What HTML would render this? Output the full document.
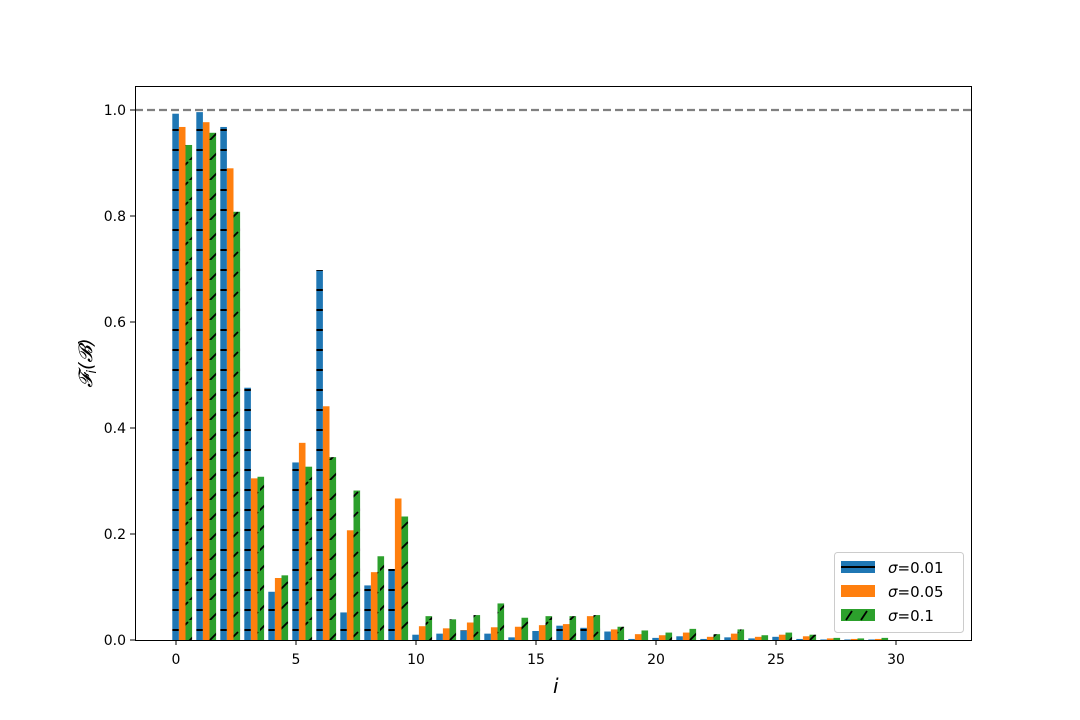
<!DOCTYPE html>
<html><head><meta charset="utf-8"><style>
html,body{margin:0;padding:0;background:#fff;width:1080px;height:720px;overflow:hidden}
svg text{font-family:"DejaVu Sans","Liberation Sans",sans-serif;fill:#000}
</style></head><body>
<svg id="s" width="1080" height="720" xmlns="http://www.w3.org/2000/svg">
<defs>
<pattern id="hb" patternUnits="userSpaceOnUse" x="0" y="0" width="24" height="20">
<rect width="24" height="20" fill="#1f77b4"/><rect y="9" width="24" height="2" fill="#000"/></pattern>
<pattern id="hg" patternUnits="userSpaceOnUse" x="0" y="0" width="20" height="20">
<rect width="20" height="20" fill="#2ca02c"/><path d="M-2,12 L8,2 M8,22 L18,12" stroke="#000" stroke-width="1.8"/></pattern>
</defs>
<rect x="135" y="86" width="837" height="554" fill="#fff"/>
<g id="bars"></g>
<line x1="135" y1="110" x2="972" y2="110" stroke="#808080" stroke-width="2.2" stroke-dasharray="8,4"/>
<rect x="135.5" y="86.5" width="836" height="554" fill="none" stroke="#000" stroke-width="1"/>
<g id="ticks" font-size="14"></g>
<text x="553" y="693" font-size="20" font-style="italic" font-family="DejaVu Serif, serif">i</text>
<text transform="translate(92,363) rotate(-90)" font-size="19" font-style="italic" text-anchor="middle" font-family="DejaVu Serif, serif">𝓕<tspan font-size="13" dy="4">i</tspan><tspan dy="-4">(𝓑)</tspan></text>
<rect x="834.5" y="552.5" width="129" height="80" rx="3" fill="#fff" fill-opacity="0.85" stroke="#ccc"/>
<rect x="841" y="561" width="34" height="12" fill="#1f77b4"/><rect x="841" y="566" width="34" height="2" fill="#000"/>
<rect x="841" y="585" width="34" height="12" fill="#ff7f0e"/>
<rect x="841" y="609" width="34" height="12" fill="#2ca02c"/><path d="M846,620 L852,611 M861,620 L867,611" stroke="#000" stroke-width="1.8"/>
<text x="888" y="573" font-size="15"><tspan font-style="italic">σ</tspan>=0.01</text>
<text x="888" y="597" font-size="15"><tspan font-style="italic">σ</tspan>=0.05</text>
<text x="888" y="621" font-size="15"><tspan font-style="italic">σ</tspan>=0.1</text>
</svg>
<script>
var d=[[.993,.968,.934],[.996,.977,.957],[.968,.890,.808],[.476,.305,.308],[.091,.117,.122],[.335,.372,.327],[.698,.441,.345],[.052,.207,.282],[.103,.128,.158],[.134,.267,.233],[.010,.026,.045],[.012,.022,.039],[.018,.033,.047],[.012,.024,.069],[.005,.025,.042],[.017,.028,.045],[.027,.030,.045],[.023,.045,.047],[.016,.020,.025],[.002,.011,.018],[.004,.009,.014],[.007,.014,.021],[.002,.006,.011],[.005,.012,.020],[.003,.006,.009],[.006,.010,.014],[.002,.007,.010],[.001,.003,.004],[.001,.002,.003],[.001,.002,.004],[0,0,0]];
var f=['url(#hb)','#ff7f0e','url(#hg)'],h='';
d.forEach(function(r,i){r.forEach(function(v,j){var H=v*530;if(H<=0)return;h+='<rect x="'+(172.3+24*i+6.6*j)+'" y="'+(640-H)+'" width="6.6" height="'+H+'" fill="'+f[j]+'"/>';});});
document.getElementById('bars').innerHTML=h;
var t='';
for(var k=0;k<=30;k+=5){var x=176+24*k;t+='<line x1="'+x+'" y1="640" x2="'+x+'" y2="645" stroke="#000"/><text x="'+x+'" y="664" text-anchor="middle">'+k+'</text>';}
for(var k=0;k<=5;k++){var y=640-106*k;t+='<line x1="130" y1="'+y+'" x2="135" y2="'+y+'" stroke="#000"/><text x="126" y="'+(y+5)+'" text-anchor="end">'+(k*0.2).toFixed(1)+'</text>';}
document.getElementById('ticks').innerHTML=t;
</script>
</body></html>
